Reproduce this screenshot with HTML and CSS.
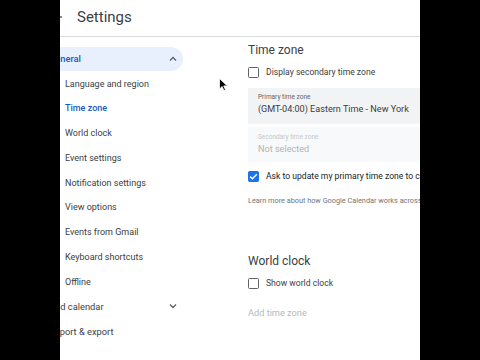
FILE: index.html
```html
<!DOCTYPE html>
<html lang="en">
<head>
    <meta charset="UTF-8">
    <meta name="viewport" content="width=device-width, initial-scale=1.0">
    <title>Settings</title>
    <link rel="stylesheet" href="styles.css">
</head>
<body>
    <div class="screen">
        <header class="topbar">
            <svg class="back" width="14" height="14" viewBox="0 0 14 14">
                <path d="M14 7H2M7 2L2 7l5 5" fill="none" stroke="#5f6368" stroke-width="1.6"/>
            </svg>
            <h1>Settings</h1>
        </header>

        <div class="layout">
            <nav class="sidebar">
                <div class="nav-top active">
                    <span>General</span>
                    <svg width="10" height="8" viewBox="0 0 10 8"><path d="M2 5.5L5 2.5l3 3" fill="none" stroke="#5f6368" stroke-width="1.4"/></svg>
                </div>
                <div class="nav-sub">Language and region</div>
                <div class="nav-sub current">Time zone</div>
                <div class="nav-sub">World clock</div>
                <div class="nav-sub">Event settings</div>
                <div class="nav-sub">Notification settings</div>
                <div class="nav-sub">View options</div>
                <div class="nav-sub">Events from Gmail</div>
                <div class="nav-sub">Keyboard shortcuts</div>
                <div class="nav-sub">Offline</div>
                <div class="nav-top">
                    <span>Add calendar</span>
                    <svg width="10" height="8" viewBox="0 0 10 8"><path d="M2 2.5L5 5.5l3-3" fill="none" stroke="#5f6368" stroke-width="1.4"/></svg>
                </div>
                <div class="nav-top">
                    <span>Import &amp; export</span>
                </div>
            </nav>

            <main class="content">
                <h2>Time zone</h2>
                <label class="check-row">
                    <span class="box"></span>
                    Display secondary time zone
                </label>

                <div class="field primary">
                    <div class="field-label">Primary time zone</div>
                    <div class="field-value">(GMT-04:00) Eastern Time - New York</div>
                </div>
                <div class="field secondary">
                    <div class="field-label">Secondary time zone</div>
                    <div class="field-value">Not selected</div>
                </div>

                <label class="check-row big">
                    <span class="box checked">
                        <svg width="9" height="9" viewBox="0 0 9 9"><path d="M1.2 4.6l2.2 2.2L7.8 2.2" fill="none" stroke="#fff" stroke-width="1.5"/></svg>
                    </span>
                    Ask to update my primary time zone to current location
                </label>
                <p class="hint">Learn more about how Google Calendar works across time zones</p>

                <h2 class="second">World clock</h2>
                <label class="check-row">
                    <span class="box"></span>
                    Show world clock
                </label>
                <div class="add-zone">Add time zone</div>
            </main>
        </div>

        <svg class="cursor" width="9" height="13" viewBox="0 0 9 13">
            <path d="M0.5 0.5v10.5l2.6-2.5 1.8 4 1.6-0.7-1.8-3.9h3.6z" fill="#000" stroke="#fff" stroke-width="0.8"/>
        </svg>
    </div>
</body>
</html>
```

FILE: styles.css
```css
body {
    margin: 0;
    height: 100vh;
    background: #000;
    display: flex;
    justify-content: center;
    font-family: Roboto, "Liberation Sans", sans-serif;
    color: #3c4043;
}

.screen {
    position: relative;
    width: 360px;
    height: 360px;
    background: #fff;
    overflow: hidden;
}

.topbar {
    height: 37px;
    display: flex;
    align-items: center;
    gap: 15px;
    border-bottom: 1px solid #dadce0;
    padding-bottom: 2px;
    box-sizing: border-box;
}

.back {
    margin-left: -12px;
    flex-shrink: 0;
}

.topbar h1 {
    margin: 0;
    font-size: 15px;
    font-weight: 400;
    color: #3c4043;
}

.layout {
    display: flex;
}

.sidebar {
    width: 212px;
    margin-left: -24px;
    padding-top: 9.5px;
    flex-shrink: 0;
}

.nav-top,
.nav-sub {
    height: 24.75px;
    display: flex;
    align-items: center;
    font-size: 9px;
    white-space: nowrap;
}

.nav-top {
    width: 147px;
    padding: 0 5px 0 13px;
    box-sizing: border-box;
    justify-content: space-between;
    font-size: 9.3px;
}

.nav-top.active {
    background: #e8f0fe;
    border-radius: 0 13px 13px 0;
    color: #1a5bb8;
    font-weight: 500;
}

.nav-sub {
    padding-left: 29px;
}

.nav-sub.current {
    color: #1a5bb8;
    font-weight: 500;
}

.content {
    flex: 1;
    padding-top: 4px;
    white-space: nowrap;
}

.content h2 {
    margin: 0 0 6px;
    padding-top: 1px;
    font-size: 12px;
    line-height: 16px;
    font-weight: 400;
    color: #3c4043;
}

.content h2.second {
    margin-top: 46px;
}

.check-row {
    height: 16px;
    display: flex;
    align-items: center;
    gap: 7px;
    font-size: 8.6px;
    color: #3c4043;
}

.check-row.big {
    margin-top: 6px;
    font-size: 8.6px;
    color: #202124;
}

.box {
    width: 11px;
    height: 11px;
    box-sizing: border-box;
    border: 1.5px solid #5f6368;
    border-radius: 1.5px;
    display: flex;
    align-items: center;
    justify-content: center;
    flex-shrink: 0;
}

.box.checked {
    background: #1a73e8;
    border-color: #1a73e8;
}

.field {
    padding: 4px 10px 8px 10px;
}

.field.primary {
    margin-top: 8px;
    background: #f1f3f4;
}

.field.secondary {
    margin-top: 3px;
    padding: 5px 10px 6px 10px;
    background: #f8f9fa;
}

.field-label {
    font-size: 6.5px;
    line-height: 10px;
    color: #5f6368;
}

.field-value {
    font-size: 9.1px;
    line-height: 14px;
    color: #3c4043;
}

.secondary .field-label {
    color: #c4c7ca;
}

.secondary .field-value {
    color: #b0b4b8;
}

.hint {
    margin: 12px 0 0;
    font-size: 7.3px;
    line-height: 10px;
    color: #70757a;
}

.add-zone {
    margin-top: 15px;
    font-size: 9.2px;
    line-height: 14px;
    color: #b5b9bd;
}

.cursor {
    position: absolute;
    left: 159px;
    top: 78px;
}
```
